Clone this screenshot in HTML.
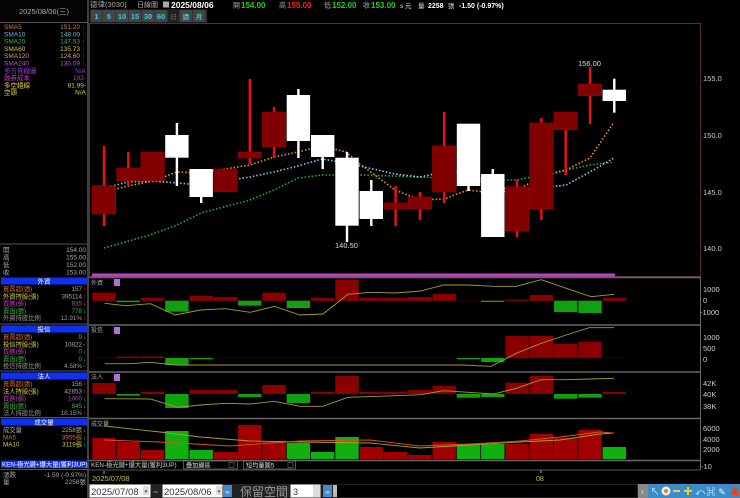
<!DOCTYPE html>
<html><head><meta charset="utf-8"><style>
html,body{margin:0;padding:0;background:#000;width:740px;height:498px;overflow:hidden}
svg{display:block}
text{font-family:"Liberation Sans","Noto Sans CJK TC",sans-serif}
</style></head><body>
<svg width="740" height="498" viewBox="0 0 740 498" xmlns="http://www.w3.org/2000/svg">
<rect width="740" height="498" fill="#000"/>
<!-- left panel -->
<rect x="0" y="0" width="88" height="22" fill="#050505"/>
<line x1="88" y1="0" x2="88" y2="498" stroke="#555" stroke-width="1.5"/>
<line x1="0" y1="22.5" x2="88" y2="22.5" stroke="#555"/>
<text x="44" y="14" font-size="7.5" fill="#aaa" text-anchor="middle">2025/08/06(三)</text>
<g font-size="6.5">
<text x="4" y="29" fill="#d0802a">SMA5</text><text x="80" y="29" fill="#d0802a" text-anchor="end">151.20</text><text x="82" y="29" fill="#f22">↑</text>
<text x="4" y="36.3" fill="#70b8d8">SMA10</text><text x="80" y="36.3" fill="#70b8d8" text-anchor="end">148.00</text><text x="82" y="36.3" fill="#f22">↑</text>
<text x="4" y="43.6" fill="#30c030">SMA20</text><text x="80" y="43.6" fill="#30c030" text-anchor="end">147.53</text><text x="82" y="43.6" fill="#f22">↑</text>
<text x="4" y="50.9" fill="#d8c840">SMA60</text><text x="80" y="50.9" fill="#d8c840" text-anchor="end">135.73</text><text x="82" y="50.9" fill="#f22">↑</text>
<text x="4" y="58.2" fill="#c8a880">SMA120</text><text x="80" y="58.2" fill="#c8a880" text-anchor="end">124.60</text><text x="82" y="58.2" fill="#f22">↑</text>
<text x="4" y="65.5" fill="#c050c8">SMA240</text><text x="80" y="65.5" fill="#c050c8" text-anchor="end">130.09</text><text x="82" y="65.5" fill="#f22">↑</text>
<text x="4" y="72.8" fill="#9040d0">多方佈線圖</text><text x="86" y="72.8" fill="#9040d0" text-anchor="end">N/A</text>
<text x="4" y="80.1" fill="#c040c0">融券成本</text><text x="86" y="80.1" fill="#c040c0" text-anchor="end">102-</text>
<text x="4" y="87.4" fill="#d8d040">多空趨線</text><text x="86" y="87.4" fill="#d8d040" text-anchor="end">81.99-</text>
<text x="4" y="94.7" fill="#d8d040">空頭</text><text x="86" y="94.7" fill="#d8d040" text-anchor="end">N/A</text>
</g>
<line x1="0" y1="244" x2="88" y2="244" stroke="#555"/>
<g font-size="6.5" fill="#aaa">
<text x="3" y="252">開</text><text x="86" y="252" text-anchor="end">154.00</text>
<text x="3" y="259.5">高</text><text x="86" y="259.5" text-anchor="end">155.00</text>
<text x="3" y="267">低</text><text x="86" y="267" text-anchor="end">152.00</text>
<text x="3" y="274.5">收</text><text x="86" y="274.5" text-anchor="end">153.00</text>
</g>
<!-- 外資 -->
<rect x="1" y="277.5" width="86" height="7" fill="#1030f0"/>
<text x="44" y="283.7" font-size="6.5" fill="#fff" text-anchor="middle">外資</text>
<g font-size="6.3">
<text x="3" y="291" fill="#d87030">買賣超(張)</text><text x="82" y="291" fill="#aaa" text-anchor="end">157</text><text x="83" y="291" fill="#f22">↑</text>
<text x="3" y="298.3" fill="#d8d040">外資持股(張)</text><text x="82" y="298.3" fill="#aaa" text-anchor="end">395114</text><text x="83" y="298.3" fill="#f22">↑</text>
<text x="3" y="305.6" fill="#c040c0">買進(張)</text><text x="82" y="305.6" fill="#c040c0" text-anchor="end">935</text><text x="83" y="305.6" fill="#3d3">↓</text>
<text x="3" y="312.9" fill="#30c030">賣出(張)</text><text x="82" y="312.9" fill="#30c030" text-anchor="end">778</text><text x="83" y="312.9" fill="#3d3">↓</text>
<text x="3" y="320.2" fill="#999">外資持股比例</text><text x="82" y="320.2" fill="#999" text-anchor="end">12.91%</text><text x="83" y="320.2" fill="#f22">↑</text>
</g>
<line x1="0" y1="324" x2="88" y2="324" stroke="#555"/>
<!-- 投信 -->
<rect x="1" y="325.5" width="86" height="7" fill="#1030f0"/>
<text x="44" y="331.7" font-size="6.5" fill="#fff" text-anchor="middle">投信</text>
<g font-size="6.3">
<text x="3" y="339" fill="#d87030">買賣超(張)</text><text x="82" y="339" fill="#aaa" text-anchor="end">0</text><text x="83" y="339" fill="#3d3">↓</text>
<text x="3" y="346.3" fill="#d8d040">投信持股(張)</text><text x="82" y="346.3" fill="#aaa" text-anchor="end">10822</text><text x="83" y="346.3" fill="#aaa">-</text>
<text x="3" y="353.6" fill="#c040c0">買進(張)</text><text x="82" y="353.6" fill="#c040c0" text-anchor="end">0</text><text x="83" y="353.6" fill="#3d3">↓</text>
<text x="3" y="360.9" fill="#30c030">賣出(張)</text><text x="82" y="360.9" fill="#30c030" text-anchor="end">0</text><text x="83" y="360.9" fill="#3d3">↓</text>
<text x="3" y="368.2" fill="#999">投信持股比例</text><text x="82" y="368.2" fill="#999" text-anchor="end">4.58%</text><text x="83" y="368.2" fill="#aaa">-</text>
</g>
<line x1="0" y1="371" x2="88" y2="371" stroke="#555"/>
<!-- 法人 -->
<rect x="1" y="372.5" width="86" height="7" fill="#1030f0"/>
<text x="44" y="378.7" font-size="6.5" fill="#fff" text-anchor="middle">法人</text>
<g font-size="6.3">
<text x="3" y="386" fill="#d87030">買賣超(張)</text><text x="82" y="386" fill="#aaa" text-anchor="end">156</text><text x="83" y="386" fill="#f22">↑</text>
<text x="3" y="393.3" fill="#d8d040">法人持股(張)</text><text x="82" y="393.3" fill="#aaa" text-anchor="end">42853</text><text x="83" y="393.3" fill="#f22">↑</text>
<text x="3" y="400.6" fill="#c040c0">買進(張)</text><text x="82" y="400.6" fill="#c040c0" text-anchor="end">1000</text><text x="83" y="400.6" fill="#3d3">↓</text>
<text x="3" y="407.9" fill="#30c030">賣出(張)</text><text x="82" y="407.9" fill="#30c030" text-anchor="end">845</text><text x="83" y="407.9" fill="#3d3">↓</text>
<text x="3" y="415.2" fill="#999">法人持股比例</text><text x="82" y="415.2" fill="#999" text-anchor="end">18.15%</text><text x="83" y="415.2" fill="#f22">↑</text>
</g>
<line x1="0" y1="417.5" x2="88" y2="417.5" stroke="#555"/>
<!-- 成交量 -->
<rect x="1" y="418.5" width="86" height="7" fill="#1030f0"/>
<text x="44" y="424.7" font-size="6.5" fill="#fff" text-anchor="middle">成交量</text>
<g font-size="6.3">
<text x="3" y="432" fill="#aaa">成交量</text><text x="82" y="432" fill="#aaa" text-anchor="end">2258張</text><text x="83" y="432" fill="#3d3">↓</text>
<text x="3" y="439.3" fill="#d87030">MA5</text><text x="82" y="439.3" fill="#d87030" text-anchor="end">3955張</text><text x="83" y="439.3" fill="#3d3">↓</text>
<text x="3" y="446.6" fill="#d8d040">MA10</text><text x="82" y="446.6" fill="#d8d040" text-anchor="end">3119張</text><text x="83" y="446.6" fill="#3d3">↓</text>
</g>
<rect x="1" y="460.5" width="86" height="7.5" fill="#1030f0"/>
<text x="2" y="466.6" font-size="6.3" fill="#fff">KEN-極光鏈+爆大量(獲利3UP)</text>
<line x1="0" y1="469.5" x2="88" y2="469.5" stroke="#555"/>
<g font-size="6.5" fill="#aaa">
<text x="3" y="477">漲跌</text><text x="86" y="477" text-anchor="end">-1.50 (-0.97%)</text>
<text x="3" y="484">量</text><text x="86" y="484" text-anchor="end">2258張</text>
</g>

<!-- top bar -->
<g font-size="8">
<text x="90" y="7" fill="#aaa" font-size="7.5">德律(3030)</text>
<text x="137" y="7" fill="#aaa" font-size="7">日線圖</text>
<rect x="163" y="1.5" width="6" height="6" fill="#aaa"/>
<text x="171" y="8" fill="#fff" font-weight="bold" font-size="8.5">2025/08/06</text>
<text x="233" y="7.5" fill="#aaa" font-size="7">開</text><text x="241" y="8" fill="#2c2" font-weight="bold">154.00</text>
<text x="279" y="7.5" fill="#aaa" font-size="7">高</text><text x="287" y="8" fill="#e22" font-weight="bold">155.00</text>
<text x="324" y="7.5" fill="#aaa" font-size="7">低</text><text x="332" y="8" fill="#2c2" font-weight="bold">152.00</text>
<text x="363" y="7.5" fill="#aaa" font-size="7">收</text><text x="371" y="8" fill="#2c2" font-weight="bold">153.00</text>
<text x="400" y="8" fill="#ddd" font-size="6.5">s 元</text>
<text x="418" y="8" fill="#ddd" font-size="6.5">量</text>
<text x="428" y="8" fill="#fff" font-weight="bold" font-size="7">2258</text>
<text x="448" y="8" fill="#ddd" font-size="6.5">張</text>
<text x="459" y="8" fill="#fff" font-weight="bold" font-size="7">-1.50 (-0.97%)</text>
</g>
<rect x="90" y="9.5" width="117" height="13" fill="#333"/>
<g font-size="7.5" fill="#40c8e0" font-weight="bold">
<rect x="91" y="10" width="11" height="12" fill="#444"/><text x="96.5" y="19" text-anchor="middle">1</text>
<rect x="103" y="10" width="12" height="12" fill="#444"/><text x="109" y="19" text-anchor="middle">5</text>
<rect x="116" y="10" width="12" height="12" fill="#444"/><text x="122" y="19" text-anchor="middle">10</text>
<rect x="129" y="10" width="12" height="12" fill="#444"/><text x="135" y="19" text-anchor="middle">15</text>
<rect x="142" y="10" width="12" height="12" fill="#444"/><text x="148" y="19" text-anchor="middle">30</text>
<rect x="155" y="10" width="12" height="12" fill="#444"/><text x="161" y="19" text-anchor="middle">60</text>
<rect x="168" y="10" width="11" height="12" fill="#222"/><text x="173.5" y="19" text-anchor="middle" fill="#555" font-size="6.5">日</text>
<rect x="180" y="10" width="12" height="12" fill="#444"/><text x="186" y="19" text-anchor="middle" font-size="6.5">週</text>
<rect x="193" y="10" width="12" height="12" fill="#444"/><text x="199" y="19" text-anchor="middle" font-size="6.5">月</text>
</g>

<!-- chart frames -->
<rect x="89.5" y="23.5" width="611" height="253" fill="none" stroke="#5a2a3a"/>
<g stroke="#666" stroke-width="1.5">
<line x1="89" y1="277.5" x2="700" y2="277.5"/>
<line x1="89" y1="325" x2="700" y2="325"/>
<line x1="89" y1="372" x2="700" y2="372"/>
<line x1="89" y1="418.5" x2="700" y2="418.5"/>
<line x1="89" y1="460.5" x2="700" y2="460.5"/>
</g>
<line x1="700.5" y1="277" x2="700.5" y2="470" stroke="#666"/>
<rect x="92" y="273.5" width="523" height="3" fill="#c040c8"/>

<!-- MA lines -->
<g fill="none" stroke-width="1.6" stroke-dasharray="1.5 2">
<polyline stroke="#20b030" points="104,248 150,235 177,225 201,213 250,200 274,190 298,178 322,175 346,175 360,175 395,176 420,177 444,178 468,177 492,180 517,180 541,175 566,170 590,165 614,162"/>
<polyline stroke="#80c8e8" points="104,188 128,182 153,181 177,183 201,185 225,181 250,177 274,172 298,166 322,159 346,163 360,166 395,174 420,177 444,172 468,173 492,187 517,190 541,188 566,185 590,172 614,158"/>
<polyline stroke="#e89030" points="104,192 128,186 153,181 177,172 201,173 225,169 250,165 274,157 298,152 322,146 346,152 360,164 395,190 420,200 444,199 468,190 492,193 517,190 541,177 566,170 590,158 614,122"/>
</g>

<!-- candles -->
<g>
<!-- red candles: wick then body -->
<g fill="#f01010">
<rect x="102.8" y="146" width="2.4" height="80"/>
<rect x="127.1" y="152" width="2.4" height="34"/>
<rect x="248.6" y="79" width="2.4" height="85"/>
<rect x="272.9" y="107" width="2.4" height="51"/>
<rect x="394.4" y="186" width="2.4" height="40"/>
<rect x="418.7" y="192" width="2.4" height="28"/>
<rect x="443" y="112" width="2.4" height="91"/>
<rect x="515.9" y="180" width="2.4" height="57"/>
<rect x="540.2" y="118" width="2.4" height="102"/>
<rect x="564.5" y="112" width="2.4" height="63"/>
<rect x="588.8" y="67" width="2.4" height="57"/>
</g>
<g fill="#800000" stroke="#a00000" stroke-width="0.6">
<rect x="92.3" y="185.7" width="23.4" height="28.3"/>
<rect x="116.6" y="168" width="23.4" height="12.7"/>
<rect x="140.9" y="152" width="23.4" height="28.7"/>
<rect x="213.8" y="169" width="23.4" height="22.7"/>
<rect x="238.1" y="152" width="23.4" height="6"/>
<rect x="262.4" y="112" width="23.4" height="34.7"/>
<rect x="383.9" y="203" width="23.4" height="6"/>
<rect x="408.2" y="197" width="23.4" height="12"/>
<rect x="432.5" y="146" width="23.4" height="46"/>
<rect x="505.4" y="186.7" width="23.4" height="44.3"/>
<rect x="529.7" y="123" width="23.4" height="85.7"/>
<rect x="554" y="112" width="23.4" height="17.7"/>
<rect x="578.3" y="84" width="23.4" height="11.7"/>
</g>
<!-- white candles -->
<g fill="#fff">
<rect x="175.7" y="123" width="2.4" height="63"/><rect x="165.2" y="135" width="23.4" height="22.7"/>
<rect x="200" y="190" width="2.4" height="13"/><rect x="189.5" y="169" width="23.4" height="28"/>
<rect x="297.2" y="89" width="2.4" height="69"/><rect x="286.7" y="95" width="23.4" height="46"/>
<rect x="321.5" y="150" width="2.4" height="19"/><rect x="311" y="135" width="23.4" height="22"/>
<rect x="345.8" y="152" width="2.4" height="90"/><rect x="335.3" y="157.7" width="23.4" height="68"/>
<rect x="370.1" y="180" width="2.4" height="46"/><rect x="359.6" y="191" width="23.4" height="28"/>
<rect x="467.3" y="180" width="2.4" height="11"/><rect x="456.8" y="123.7" width="23.4" height="62.3"/>
<rect x="491.6" y="169" width="2.4" height="10"/><rect x="481.1" y="174" width="23.4" height="63"/>
<rect x="613.1" y="78.7" width="2.4" height="34"/><rect x="602.6" y="89.7" width="23.4" height="11.3"/>
</g>
</g>
<text x="578" y="66" font-size="7.5" fill="#ddd">156.00</text>
<text x="335" y="248" font-size="7.5" fill="#ddd">140.50</text>
<g font-size="7.5" fill="#ccc">
<text x="703" y="81">155.0</text><text x="703" y="138">150.0</text><text x="703" y="195">145.0</text><text x="703" y="251">140.0</text>
</g>

<!-- 外資 panel -->
<text x="91" y="285" font-size="6" fill="#aaa">外資</text><rect x="114" y="279" width="6" height="7" fill="#b070d8"/>
<line x1="92" y1="300.7" x2="626" y2="300.7" stroke="#300" stroke-width="0.6"/>
<g fill="#8a0000">
<rect x="92.3" y="292.7" width="23.4" height="8"/>
<rect x="140.9" y="298" width="23.4" height="2.7"/>
<rect x="189.5" y="296" width="23.4" height="4.7"/>
<rect x="213.8" y="297" width="23.4" height="3.7"/>
<rect x="262.4" y="292.7" width="23.4" height="8"/>
<rect x="311" y="298" width="23.4" height="2.7"/>
<rect x="335.3" y="280" width="23.4" height="20.7"/>
<rect x="359.6" y="298" width="23.4" height="2.7"/>
<rect x="383.9" y="298" width="23.4" height="2.7"/>
<rect x="408.2" y="297" width="23.4" height="3.7"/>
<rect x="432.5" y="294" width="23.4" height="6.7"/>
<rect x="505.4" y="299.5" width="23.4" height="1.2"/>
<rect x="529.7" y="295" width="23.4" height="5.7"/>
<rect x="602.6" y="298" width="23.4" height="2.7"/>
</g>
<g fill="#10a010">
<rect x="116.6" y="300.7" width="23.4" height="1.5"/>
<rect x="165.2" y="300.7" width="23.4" height="11"/>
<rect x="238.1" y="300.7" width="23.4" height="5"/>
<rect x="286.7" y="300.7" width="23.4" height="7.3"/>
<rect x="481.1" y="300.7" width="23.4" height="1.3"/>
<rect x="554" y="300.7" width="23.4" height="11.3"/>
<rect x="578.3" y="300.7" width="23.4" height="12.3"/>
</g>
<polyline fill="none" stroke="#a0a020" stroke-width="0.9" points="104.6,303.3 125.4,305.7 150.4,303.7 175.3,315 200.3,310 225.2,308.7 250.2,312.3 274.3,306.3 300,315 323,314 347.9,294.3 370.7,292.3 395.7,293 420.6,291 443.5,285 468.5,285 493.4,286.3 516.3,286.3 541.2,279.7 566.2,288.3 591.1,296.7 614,294.3"/>
<g font-size="7.5" fill="#ccc"><text x="703" y="292">1000</text><text x="703" y="303">0</text><text x="700" y="315">-1000</text></g>

<!-- 投信 panel -->
<text x="91" y="332" font-size="6" fill="#aaa">投信</text><rect x="114" y="327" width="6" height="7" fill="#b070d8"/>
<line x1="92" y1="358" x2="626" y2="358" stroke="#400" stroke-width="0.6"/>
<g fill="#8a0000">
<rect x="116.6" y="356.5" width="23.4" height="1.5"/>
<rect x="140.9" y="356.5" width="23.4" height="1.5"/>
<rect x="505.4" y="336" width="23.4" height="22"/>
<rect x="529.7" y="336" width="23.4" height="22"/>
<rect x="554" y="344" width="23.4" height="14"/>
<rect x="578.3" y="341.7" width="23.4" height="16.3"/>
</g>
<g fill="#10a010">
<rect x="165.2" y="358" width="23.4" height="7"/>
<rect x="189.5" y="358" width="23.4" height="1.3"/>
<rect x="456.8" y="358" width="23.4" height="1.3"/>
<rect x="481.1" y="358" width="23.4" height="4"/>
</g>
<polyline fill="none" stroke="#a0a020" stroke-width="0.9" points="104.6,363.7 129.6,363.7 150.4,362.3 175.3,365 308.4,365 462.2,365 491.3,366.3 516.3,353.3 541.2,343.3 566.2,335 589,327.7 614,327.7"/>
<g font-size="7.5" fill="#ccc"><text x="703" y="340">1000</text><text x="703" y="351">500</text><text x="703" y="362">0</text></g>

<!-- 法人 panel -->
<text x="91" y="379" font-size="6" fill="#aaa">法人</text><rect x="114" y="374" width="6" height="7" fill="#b070d8"/>
<g fill="#8a0000">
<rect x="92.3" y="383" width="23.4" height="11"/>
<rect x="140.9" y="391.7" width="23.4" height="2.3"/>
<rect x="189.5" y="390" width="23.4" height="4"/>
<rect x="213.8" y="390" width="23.4" height="4"/>
<rect x="262.4" y="385" width="23.4" height="9"/>
<rect x="311" y="391.7" width="23.4" height="2.3"/>
<rect x="335.3" y="376" width="23.4" height="18"/>
<rect x="359.6" y="391.7" width="23.4" height="2.3"/>
<rect x="383.9" y="391.7" width="23.4" height="2.3"/>
<rect x="408.2" y="390" width="23.4" height="4"/>
<rect x="432.5" y="386" width="23.4" height="8"/>
<rect x="505.4" y="382.7" width="23.4" height="11.3"/>
<rect x="529.7" y="376" width="23.4" height="18"/>
<rect x="602.6" y="392" width="23.4" height="2"/>
</g>
<g fill="#10a010">
<rect x="116.6" y="394" width="23.4" height="1.7"/>
<rect x="165.2" y="394" width="23.4" height="14"/>
<rect x="238.1" y="394" width="23.4" height="3"/>
<rect x="286.7" y="394" width="23.4" height="9"/>
<rect x="456.8" y="394" width="23.4" height="3.7"/>
<rect x="481.1" y="394" width="23.4" height="3"/>
<rect x="554" y="394" width="23.4" height="4.7"/>
<rect x="578.3" y="394" width="23.4" height="3.7"/>
</g>
<polyline fill="none" stroke="#a0a020" stroke-width="0.9" points="104.6,398.7 150.4,399 177.4,407.3 200.3,405 225.2,403.3 250.2,404 274.3,401.3 300,406.3 323,406.3 347.9,397.3 395.7,395.7 420.6,394.7 443.5,390.7 468.5,392.3 493.4,394 516.3,388.3 541.2,379.7 566.2,379.7 591.1,379 614,378.3"/>
<g font-size="7.5" fill="#ccc"><text x="703" y="386">42K</text><text x="703" y="397">40K</text><text x="703" y="409">38K</text></g>

<!-- volume panel -->
<text x="91" y="426" font-size="6" fill="#aaa">成交量</text>
<g fill="#a00000">
<rect x="92.3" y="438" width="23.4" height="21"/>
<rect x="116.6" y="442" width="23.4" height="17"/>
<rect x="140.9" y="450" width="23.4" height="9"/>
<rect x="213.8" y="452" width="23.4" height="7"/>
<rect x="238.1" y="425" width="23.4" height="34"/>
<rect x="262.4" y="441" width="23.4" height="18"/>
<rect x="359.6" y="447" width="23.4" height="12"/>
<rect x="383.9" y="452" width="23.4" height="7"/>
<rect x="408.2" y="455" width="23.4" height="4"/>
<rect x="432.5" y="442" width="23.4" height="17"/>
<rect x="505.4" y="444" width="23.4" height="15"/>
<rect x="529.7" y="434" width="23.4" height="25"/>
<rect x="554" y="438" width="23.4" height="21"/>
<rect x="578.3" y="430" width="23.4" height="29"/>
</g>
<g fill="#10b010">
<rect x="165.2" y="431" width="23.4" height="28"/>
<rect x="189.5" y="450" width="23.4" height="9"/>
<rect x="286.7" y="443" width="23.4" height="16"/>
<rect x="311" y="452" width="23.4" height="7"/>
<rect x="335.3" y="437" width="23.4" height="22"/>
<rect x="456.8" y="444" width="23.4" height="15"/>
<rect x="481.1" y="444" width="23.4" height="15"/>
<rect x="602.6" y="447" width="23.4" height="12"/>
</g>
<polyline fill="none" stroke="#a0a020" stroke-width="0.9" points="104,426 160,432 200,437 250,441 300,442 370,443 420,448 470,445 520,442 560,440 600,434 614,433"/>
<polyline fill="none" stroke="#e05020" stroke-width="0.9" points="104,440 160,442 230,446 300,441 370,440 420,446 470,444 520,441 560,437 600,432 614,433"/>
<g font-size="7.5" fill="#ccc"><text x="703" y="431">6000</text><text x="703" y="442">4000</text><text x="703" y="452">2000</text><text x="701" y="469">-10</text></g>

<!-- indicator selector row -->
<line x1="89" y1="470" x2="700" y2="470" stroke="#555"/>
<text x="91" y="467" font-size="6.3" fill="#ccc">KEN-極光鏈+爆大量(獲利3UP)</text>
<rect x="183.5" y="461" width="54" height="8" fill="#000" stroke="#888" stroke-width="0.6"/>
<text x="186" y="467.3" font-size="6.2" fill="#ddd">疊加顯區</text><rect x="229" y="462.5" width="5" height="5" fill="#000" stroke="#888" stroke-width="0.5"/>
<rect x="243.5" y="461" width="52" height="8" fill="#000" stroke="#888" stroke-width="0.6"/>
<text x="246" y="467.3" font-size="6.2" fill="#ddd">短均量圖5</text><rect x="288" y="462.5" width="5" height="5" fill="#000" stroke="#888" stroke-width="0.5"/>
<line x1="104" y1="471" x2="104" y2="474" stroke="#aaa"/>
<text x="92" y="481" font-size="7.5" fill="#c8c040">2025/07/08</text>
<line x1="541" y1="470" x2="541" y2="473" stroke="#aaa"/>
<text x="536" y="481" font-size="7" fill="#c8c040">08</text>

<!-- bottom controls -->
<rect x="89" y="484" width="651" height="14" fill="#222"/>
<rect x="89.5" y="484.5" width="61" height="13" fill="#fff" stroke="#888" stroke-width="0.5"/>
<text x="91" y="495" font-size="9.5" fill="#333">2025/07/08</text>
<rect x="143" y="486" width="6" height="9" fill="#ddd"/><text x="146" y="493" font-size="5" fill="#333" text-anchor="middle">▾</text>
<text x="153" y="495" font-size="9" fill="#ccc">~</text>
<rect x="162.5" y="484.5" width="60" height="13" fill="#fff" stroke="#888" stroke-width="0.5"/>
<text x="164" y="495" font-size="9.5" fill="#333">2025/08/06</text>
<rect x="216" y="486" width="6" height="9" fill="#ddd"/><text x="219" y="493" font-size="5" fill="#333" text-anchor="middle">▾</text>
<rect x="223" y="485" width="9" height="12" fill="#4a88c8"/><text x="227.5" y="494" font-size="6" fill="#fff" text-anchor="middle">∞</text>
<text x="240" y="496" font-size="12" fill="#999">保留空間</text>
<rect x="290.5" y="484.5" width="30" height="13" fill="#fff" stroke="#888" stroke-width="0.5"/>
<text x="293" y="495" font-size="9" fill="#333">3</text>
<rect x="313" y="485" width="7" height="12" fill="#ddd"/>
<rect x="323" y="485" width="9" height="12" fill="#4a88c8"/><text x="327.5" y="494" font-size="6" fill="#fff" text-anchor="middle">∞</text>
<rect x="333" y="485" width="4" height="12" fill="#bbb"/>
<rect x="337" y="485" width="300" height="12" fill="#000"/>
<!-- toolbar -->
<rect x="638" y="484" width="10" height="14" fill="#888"/>
<text x="641" y="494" font-size="8" fill="#fff">›</text>
<rect x="648" y="484" width="92" height="14" fill="#3c8cc8"/>
<g font-size="9" text-anchor="middle">
<text x="655" y="495" fill="#dff">↖</text>
<circle cx="666" cy="491" r="4.5" fill="#f0f0f0"/><circle cx="666" cy="491" r="2" fill="#f08020"/>
<rect x="673" y="490" width="7" height="2" fill="#f0d020"/>
<rect x="684" y="490" width="8" height="2" fill="#f0d020"/><rect x="687" y="487" width="2" height="8" fill="#f0d020"/>
<text x="700" y="495" fill="#dff">⤺</text>
<text x="711" y="495" fill="#dff">⌘</text>
<text x="722" y="495" fill="#dff">✎</text>
<path d="M731 495 L739 495 L737.5 492 L737.5 489 Q735 485.5 732.5 489 L732.5 492 Z" fill="#f04010"/>
</g>
</svg>
</body></html>
